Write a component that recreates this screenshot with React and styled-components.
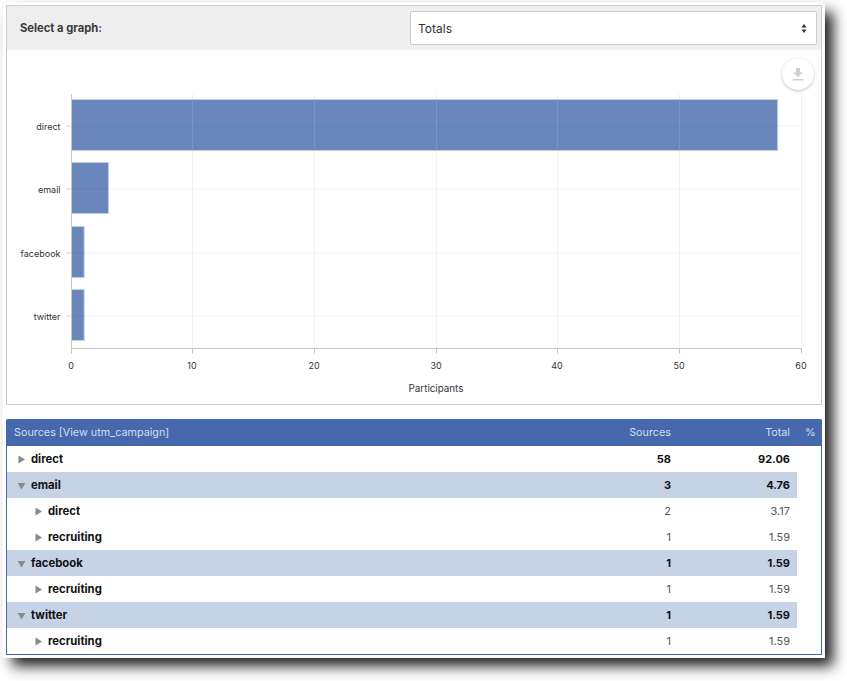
import React from "react";
import styled, { createGlobalStyle } from "styled-components";

const Global = createGlobalStyle`
  html, body { margin: 0; background: #fff; }
  html, body, #root { min-height: 681px; }
  body { font-family: Inter, "Noto Sans", "Liberation Sans", sans-serif; color: #222; overflow: hidden; }
  #root { display: flow-root; }
`;

const Frame = styled.div`
  width: 821px;
  height: 654px;
  box-sizing: border-box;
  margin: 3px 0 0 3px;
  padding: 2px 2px 0 3px;
  background: #fff;
  box-shadow: 0 0 0 1px #f6f6f6, 9px 9px 13px rgba(0, 0, 0, 0.88);
`;

const GraphCard = styled.section`
  height: 400px;
  box-sizing: border-box;
  border: 1px solid #ccc;
  display: flex;
  flex-direction: column;
`;

const GraphHeader = styled.header`
  height: 44px;
  flex: none;
  background: #eee;
  display: flex;
  align-items: center;
  justify-content: space-between;
  padding: 0 4px 0 13px;
`;

const GraphLabel = styled.label`
  font-size: 11.2px;
  font-weight: 700;
  color: #3a3a3a;
  margin-top: -1px;
`;

const FakeSelect = styled.div`
  width: 407px;
  height: 34px;
  box-sizing: border-box;
  border: 1px solid #ccc;
  border-radius: 2px;
  background: #fff;
  display: flex;
  align-items: center;
  justify-content: space-between;
  padding: 0 9px 0 7px;
  font-size: 12px;
  color: #333;
`;

const ChartArea = styled.div`
  position: relative;
  flex: 1;
`;

const ChartSvg = styled.svg`
  display: block;
`;

const DownloadButton = styled.div`
  position: absolute;
  top: 8px;
  right: 7px;
  width: 32px;
  height: 32px;
  border-radius: 50%;
  background: #fff;
  box-shadow: 0 1px 3px rgba(0, 0, 0, 0.25);
  display: flex;
  align-items: center;
  justify-content: center;
`;

const AxisTitle = styled.div`
  position: absolute;
  left: 0;
  right: 0;
  top: 333px;
  padding-left: 44px;
  text-align: center;
  font-size: 9.8px;
  color: #333;
`;

const TableCard = styled.section`
  margin-top: 14px;
  border: solid #4669ad;
  border-width: 0 1px 1px 1px;
  border-radius: 2px 2px 0 0;
`;

const HeaderRow = styled.div`
  height: 27px;
  margin: 0 -1px;
  border-radius: 2px 2px 0 0;
  background: #4669ad;
  color: #d5deee;
  font-size: 10.8px;
  display: grid;
  grid-template-columns: 1fr 90px 119px 32px;
  align-items: center;
  padding-left: 8px;
`;

const HeadCell = styled.div`
  text-align: ${(p) => (p.$right ? "right" : "left")};
  padding-left: ${(p) => (p.$pct ? 15 : 0)}px;
`;

const Row = styled.div`
  height: 26px;
  width: 790px;
  box-sizing: border-box;
  display: grid;
  grid-template-columns: 1fr 90px 119px 7px;
  align-items: center;
  background: ${(p) => (p.$open ? "#c6d2e6" : "#fff")};
  padding-left: ${(p) => (p.$child ? 27 : 10)}px;
  font-size: 11px;
  color: #111;
`;

const NameCell = styled.div`
  display: flex;
  align-items: center;
  gap: 5px;
  font-size: 11.3px;
  line-height: 14px;
  font-weight: 700;
  color: #111;
`;

const NumCell = styled.div`
  text-align: right;
  font-weight: ${(p) => (p.$bold ? 700 : 400)};
  color: ${(p) => (p.$bold ? "#111" : "#555")};
`;

const Arrow = styled.svg`
  flex: none;
  display: block;
`;

const Toggle = ({ open }) => (
  <Arrow width="9" height="9" viewBox="0 0 9 9">
    {open ? <path d="M0.5 2h8L4.5 8.5z" fill="#8a8a8a" /> : <path d="M1.5 0.5v8L8 4.5z" fill="#8a8a8a" />}
  </Arrow>
);

const bars = [
  { label: "direct", v: 58, y: 49.5 },
  { label: "email", v: 3, y: 112.5 },
  { label: "facebook", v: 1, y: 176.5 },
  { label: "twitter", v: 1, y: 239.5 },
];
const X0 = 64.5;
const UNIT = 12.167;
const AXIS_Y = 298.5;
const TICKS = [64.5, 185.5, 307.5, 429.5, 550.5, 672.5, 794.5];

const Chart = () => (
  <ChartSvg width="814" height="354" viewBox="0 0 814 354" fontFamily="Inter, 'Noto Sans', sans-serif">
    {TICKS.slice(1).map((x) => (
      <line key={x} x1={x} x2={x} y1="44" y2={AXIS_Y} stroke="#f2f2f2" />
    ))}
    {bars.map((b) => (
      <line key={b.label} x1={X0} x2="795" y1={b.y + 26.5} y2={b.y + 26.5} stroke="#f2f2f2" />
    ))}
    {bars.map((b) => (
      <g key={b.label}>
        <rect
          x={X0}
          y={b.y}
          width={b.v * UNIT + 0.5}
          height="51"
          fill="#6a87bb"
          stroke="#c3cfe5"
          strokeWidth="1"
        />
        <line x1={X0} x2={X0 + b.v * UNIT} y1={b.y + 26.5} y2={b.y + 26.5} stroke="#6480b4" />
      </g>
    ))}
    {TICKS.slice(1).filter((x) => x < X0 + 58 * UNIT).map((x) => (
      <line key={x} x1={x} x2={x} y1="50" y2="100" stroke="#7b95c4" />
    ))}
    <line x1={X0} x2={X0} y1="44" y2={AXIS_Y + 5} stroke="#c4c4c4" />
    <line x1={X0} x2="795" y1={AXIS_Y} y2={AXIS_Y} stroke="#c4c4c4" />
    {bars.map((b) => (
      <g key={b.label}>
        <line x1={X0 - 5} x2={X0} y1={b.y + 26.5} y2={b.y + 26.5} stroke="#d0d0d0" />
        <text x={X0 - 11} y={b.y + 30.5} textAnchor="end" fontSize="9" fill="#333">{b.label}</text>
      </g>
    ))}
    {TICKS.map((x, t) => (
      <g key={t}>
        <line x1={x} x2={x} y1={AXIS_Y} y2={AXIS_Y + 5} stroke="#c4c4c4" />
        <text x={x - 0.5} y="318.5" textAnchor="middle" fontSize="9" fill="#333">{t * 10}</text>
      </g>
    ))}
  </ChartSvg>
);

const rows = [
  { name: "direct", s: 58, t: "92.06" },
  { name: "email", s: 3, t: "4.76", open: true },
  { name: "direct", s: 2, t: "3.17", child: true },
  { name: "recruiting", s: 1, t: "1.59", child: true },
  { name: "facebook", s: 1, t: "1.59", open: true },
  { name: "recruiting", s: 1, t: "1.59", child: true },
  { name: "twitter", s: 1, t: "1.59", open: true },
  { name: "recruiting", s: 1, t: "1.59", child: true },
];

export default function App() {
  return (
    <>
      <Global />
      <Frame>
        <GraphCard>
          <GraphHeader>
            <GraphLabel>Select a graph:</GraphLabel>
            <FakeSelect>
              <span>Totals</span>
              <svg width="6" height="9" viewBox="0 0 6 9">
                <path d="M3 0l2.6 3.4H.4zM3 9L.4 5.6h5.2z" fill="#333" />
              </svg>
            </FakeSelect>
          </GraphHeader>
          <ChartArea>
            <Chart />
            <AxisTitle>Participants</AxisTitle>
            <DownloadButton>
              <svg width="12" height="13" viewBox="0 0 12 13">
                <path d="M4 0h4v4.5h3L6 9 1 4.5h3zM0.5 11h11v1.6H.5z" fill="#cfcfcf" />
              </svg>
            </DownloadButton>
          </ChartArea>
        </GraphCard>
        <TableCard>
          <HeaderRow>
            <HeadCell>Sources [View utm_campaign]</HeadCell>
            <HeadCell $right>Sources</HeadCell>
            <HeadCell $right>Total</HeadCell>
            <HeadCell $pct>%</HeadCell>
          </HeaderRow>
          {rows.map((r, i) => (
            <Row key={i} $open={r.open} $child={r.child}>
              <NameCell>
                <Toggle open={r.open} />
                {r.name}
              </NameCell>
              <NumCell $bold={!r.child}>{r.s}</NumCell>
              <NumCell $bold={!r.child}>{r.t}</NumCell>
              <span />
            </Row>
          ))}
        </TableCard>
      </Frame>
    </>
  );
}
